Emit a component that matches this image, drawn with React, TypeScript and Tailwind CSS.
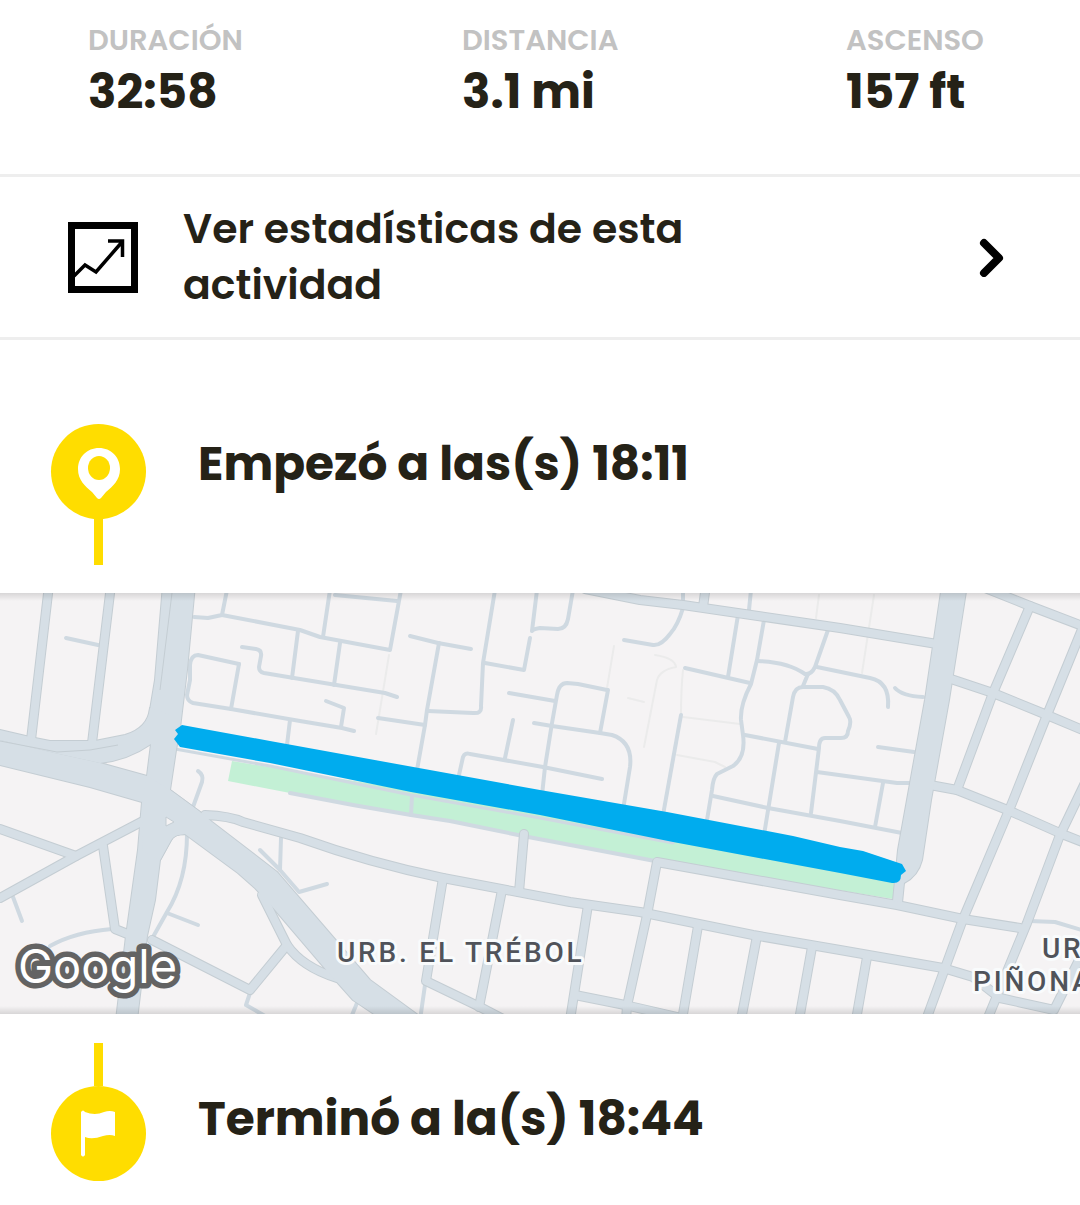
import type { ReactNode } from "react";

const stats = [
  { label: "DURACIÓN", value: "32:58" },
  { label: "DISTANCIA", value: "3.1 mi" },
  { label: "ASCENSO", value: "157 ft" },
];

// Wide areas: avenues and junctions
const avenues = [
  "M163 585L195 585L187 670L180 728L176 750L170 790L200 812L185 834Q174 834 171 840L160 860L155 900L147 936L137 1020L116 1020L126 936L138 850L142 802L147 776L151 744L146 724Q149 720 150 710L155 680Z",
  "M0 730L30 737L50 741L95 741L125 735Q148 728 150 708L170 715L151 744Q128 760 100 763L50 752L0 740Z",
  "M0 740L50 752L100 763L147 776L170 790L142 802L90 787L0 765Z",
  "M147 776L170 790L200 812L212 822L277 872L333 937L370 980L422 1018L380 1018L353 1000L328 972L270 904L255 888L238 873L185 834Q174 834 171 840L160 860L142 850L143 800Z",
  "M942 585L967 585L949 700L931 800L922 860Q918 876 904 883L902 903L893 901L898 850L907 800L925 700Z",
];

const streets = [
  "M49 585L31 740",
  "M111 585L92 743",
  "M0 829L76 856",
  "M0 898L76 856L143 821",
  "M103 846L115 929L130 935",
  "M152 940L250 990L287 945",
  "M262 895L287 945Q302 967 337 978",
  "M205 815Q230 816 243 822L300 838Q370 863 443 878L570 902L640 912L753 935L840 950L943 968L973 977L1000 998L1054 1010L1080 958",
  "M443 878L426 981L480 1007L505 1020",
  "M502 890L479 1007",
  "M588 905L570 1020",
  "M575 995L625 1005L690 1020",
  "M1020 928L963 919L897 905L840 895L657 862L647 915L627 1006L626 1020",
  "M698 926L682 1020",
  "M757 936L741 1020",
  "M812 947L799 1020",
  "M867 957L856 1020",
  "M524 834L519 892",
  "M585 589L640 600L683 605L840 628L937 644",
  "M706 585L703 607",
  "M948 678L993 693L1047 715L1085 731",
  "M985 588L1030 606L1085 627",
  "M1030 606L993 693L957 790",
  "M1085 622L1047 715L1012 803L963 919L926 1020",
  "M1085 783L1060 835L1027 923L987 1020",
  "M930 785L957 790L1010 811L1062 834L1085 843",
];

const lanes = [
  "M66 638L98 645",
  "M227 590L222 615L208 618L194 617",
  "M222 615L300 630L320 637L390 650L401 590",
  "M330 590L323 637",
  "M335 595L397 601",
  "M298 631L292 678",
  "M340 643L334 685",
  "M239 664L198 655Q191 655 190 665L190 680L187 695Q187 701 193 703L231 709L300 721L342 728L354 731",
  "M239 664L231 709",
  "M242 647L256 649Q262 650 261 656L259 667Q259 672 264 673L300 679L385 693L397 697",
  "M326 701L344 708L341 727",
  "M290 720L287 745",
  "M410 636L438 643L471 649",
  "M439 643L427 710L425 725L417 770",
  "M378 718L425 725",
  "M428 711L473 713Q482 714 481 706L483 663L495 590",
  "M485 663L524 670L530 638",
  "M537 590L532 631Q533 629 540 628L558 629Q566 629 568 619L573 590",
  "M509 693L555 701",
  "M607 690L578 684L567 683Q559 683 557 695L552 723L545 767L542 795",
  "M608 690L600 733",
  "M534 723L552 726L600 733L612 735Q633 742 630 767L623 810",
  "M459 775L463 757Q465 752 470 754L543 767L602 779",
  "M513 720L505 758",
  "M624 640L653 645Q661 646 670 634Q678 625 683 608",
  "M683 590L683 604",
  "M751 590L749 610",
  "M685 668L750 683",
  "M738 615L728 677",
  "M764 620L757 660L751 684Q740 705 741 720L743 735Q746 757 733 766L717 774Q713 778 712 790L707 820",
  "M758 661Q788 662 805 674Q811 675 815 667L828 630",
  "M808 674L803 686",
  "M817 667L870 678Q890 682 888 707",
  "M785 742L793 697Q795 687 803 687L823 687Q835 689 840 700L849 717Q852 722 848 731Q848 738 841 738L825 738Q819 738 819 748L811 813",
  "M745 735L818 749",
  "M779 743L764 835",
  "M681 715L663 815",
  "M713 796L768 808L840 821L902 833",
  "M817 772L897 783L910 783",
  "M883 783L875 827",
  "M895 688Q902 696 923 697",
  "M878 747L914 752",
  "M198 771Q204 775 202 782L193 807",
  "M13 897L22 921",
  "M50 946Q75 932 112 929",
  "M187 834Q187 880 167 912L153 937",
  "M167 913L198 925",
  "M281 838L280 870",
  "M260 850L280 870L299 892L327 884",
  "M250 993L246 1005L272 1020",
  "M357 1003L350 1020",
  "M425 985L420 1020",
  "M1030 921L1055 922L1085 931",
];

const footpaths = [
  "M614 646L607 688",
  "M655 655Q675 658 676 667Q660 670 657 680L644 747",
  "M683 670Q681 690 681 715",
  "M683 717L740 724",
  "M677 755L715 762L725 767",
  "M628 698L644 702",
  "M389 655L376 734",
  "M819 595L816 618",
  "M874 595L862 673",
];

const RouteMap = () => (
  <div className="relative h-[421px] w-full overflow-hidden bg-[#f5f3f4]">
    <svg
      viewBox="0 593 1080 421"
      preserveAspectRatio="xMidYMid slice"
      className="block h-full w-full"
      role="img"
      aria-label="Mapa de la ruta"
    >
      <path
        d="M232 761L228 781L290 793L411 815L655 860L893 899L898 870Z"
        className="fill-[#c3f0d5]"
      />
      <g fill="none" strokeLinecap="round" strokeLinejoin="round">
        <g className="stroke-[#ebebeb]" strokeWidth="2">
          {footpaths.map((d) => (
            <path key={d} d={d} />
          ))}
        </g>
        <g className="stroke-[#cfd9e1]" strokeWidth="4">
          {lanes.map((d) => (
            <path key={d} d={d} />
          ))}
          <path d="M290 793L353 805L411 815L450 821L523 836L655 861" />
          <path d="M412 796L411 815" />
          <path d="M175 749L270 766L411 795L540 818L673 843" strokeWidth="3" />
        </g>
        {/* outline under every road, then the fills on top */}
        <g className="stroke-[#c4cdd3]">
          {avenues.map((d) => (
            <path key={d} d={d} strokeWidth="2" />
          ))}
          {streets.map((d) => (
            <path key={d} d={d} strokeWidth="10" />
          ))}
        </g>
        <g className="stroke-[#d6dfe6]">
          {streets.map((d) => (
            <path key={d} d={d} strokeWidth="8" />
          ))}
        </g>
      </g>
      <g className="fill-[#d6dfe6]">
        {avenues.map((d) => (
          <path key={d} d={d} />
        ))}
      </g>
      <g fill="none" className="stroke-[#c4cdd3]" strokeWidth="1">
        <path d="M172 593L160 690" />
        <path d="M0 741L57 752L90 750L118 745" />
        <path d="M166 817L174 822L166 826Z" className="fill-[#f5f3f4]" />
      </g>
      <path
        d="M182 725L175 730L178 734L174 739L180 747L270 763L411 792L540 815L673 842L840 873L892 883Q901 884 901 875L906 871L902 864L863 851L840 847L793 836L667 812L540 790L270 741Z"
        className="fill-[#00acee]"
      />
      <g
        className="fill-[#50535a] stroke-[#f9fbfc] font-['Roboto'] text-[28px] font-medium tracking-widest"
        strokeWidth="6"
        strokeLinejoin="round"
        paintOrder="stroke"
      >
        <text x="337" y="962">URB. EL TRÉBOL</text>
        <text x="1042" y="958">UR</text>
        <text x="973" y="991">PIÑONA</text>
      </g>
      <text
        x="18"
        y="983"
        className="fill-white stroke-[#636363] font-['Inter'] text-[47px] font-normal"
        strokeWidth="11"
        strokeLinejoin="round"
        paintOrder="stroke"
      >
        Google
      </text>
    </svg>
    <div className="absolute inset-x-0 top-0 h-2 bg-gradient-to-b from-black/12 to-transparent" />
    <div className="absolute inset-x-0 bottom-0 h-2 bg-gradient-to-t from-black/12 to-transparent" />
  </div>
);

const Badge = ({ children }: { children: ReactNode }) => (
  <div className="flex size-[95px] items-center justify-center rounded-full bg-[#ffdd00]">
    {children}
  </div>
);

const App = () => {
  return (
    <main className="min-h-screen bg-white font-['Poppins','Inter',sans-serif] text-[#252217]">
      <dl className="grid grid-cols-[374fr_384fr_140fr] pt-5 pr-[94px] pb-[50px] pl-[88px]">
        {stats.map((stat) => (
          <div key={stat.label} className="whitespace-nowrap">
            <dt className="text-[29px] leading-10 font-semibold text-[#c2c2c2]">{stat.label}</dt>
            <dd className="text-[47px] leading-[64px] font-bold">{stat.value}</dd>
          </div>
        ))}
      </dl>

      <button
        type="button"
        className="flex w-full items-center border-y-3 border-[#eeeeee] py-6 pr-[72px] pl-[68px] text-left"
      >
        <svg viewBox="0 0 70 71" className="h-[71px] w-[70px] shrink-0" fill="none" stroke="#000">
          <rect x="3.5" y="3.5" width="63" height="64" strokeWidth="7" />
          <path d="M6 54L17 43L28 50L54 20M40 19H54.500V35" strokeWidth="3.500" />
        </svg>
        <span className="ml-[45px] max-w-[560px] text-[41px] leading-[56px] font-semibold">
          Ver estadísticas de esta actividad
        </span>
        <svg viewBox="0 0 32 40" className="ml-auto h-10 w-8 shrink-0" fill="none" stroke="#000">
          <path d="M8 6L23 21L8 36" strokeWidth="8" strokeLinecap="round" strokeLinejoin="round" />
        </svg>
      </button>

      <section className="flex items-start gap-[52px] pt-[84px] pb-7 pl-[51px]">
        <div className="flex flex-col items-center">
          <Badge>
            <svg viewBox="0 0 42 52" className="mt-1 h-[52px] w-[42px]">
              <path
                d="M21 0C9 0 0 9 0 21C0 32 7 38 14 44L19 50Q21 52 23 50L28 44C35 38 42 32 42 21C42 9 33 0 21 0Z"
                fill="#fff"
              />
              <ellipse cx="21" cy="20" rx="11" ry="12" fill="#ffdd00" />
            </svg>
          </Badge>
          <div className="h-[46px] w-[9px] bg-[#ffdd00]" />
        </div>
        <h2 className="pt-[10px] text-[47px] leading-[60px] font-bold">Empezó a las(s) 18:11</h2>
      </section>

      <RouteMap />

      <section className="flex items-end gap-[52px] pt-[29px] pb-6 pl-[51px]">
        <div className="flex flex-col items-center">
          <div className="h-[43px] w-[9px] bg-[#ffdd00]" />
          <Badge>
            <svg viewBox="0 0 36 50" className="h-[50px] w-9" fill="#fff">
              <path d="M0 3Q2 0 4 3Q14 7 23 3Q29 1 34 3V27Q29 25 22 27Q11 31 4 28V46Q2 49 0 46Z" />
            </svg>
          </Badge>
        </div>
        <h2 className="pb-8 text-[47px] leading-[60px] font-bold">Terminó a la(s) 18:44</h2>
      </section>
    </main>
  );
};

export default App;
